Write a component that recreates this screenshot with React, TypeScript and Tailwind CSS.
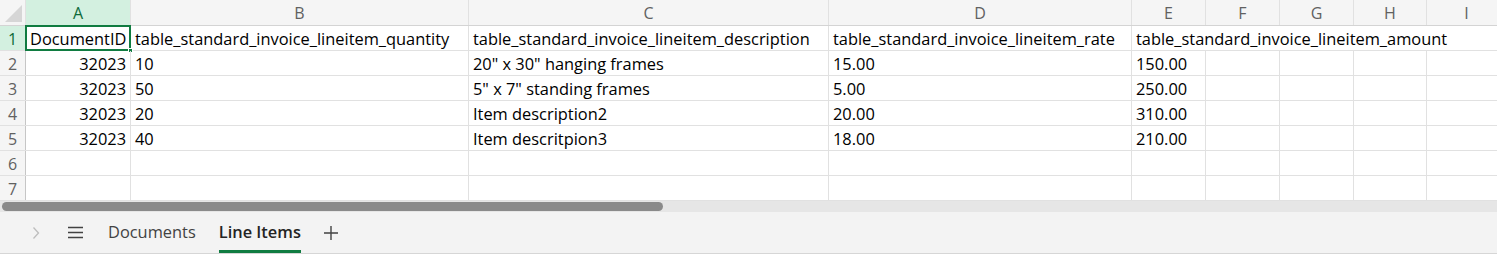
import React from "react"

const cols = [
  { label: "A", w: "w-[105px]" },
  { label: "B", w: "w-[338px]" },
  { label: "C", w: "w-[360px]" },
  { label: "D", w: "w-[303px]" },
  { label: "E", w: "w-[74px]" },
  { label: "F", w: "w-[74px]" },
  { label: "G", w: "w-[74px]" },
  { label: "H", w: "w-[73px]" },
  { label: "I", w: "w-[80px]" },
]

const rows: string[][] = [
  ["DocumentID", "table_standard_invoice_lineitem_quantity", "table_standard_invoice_lineitem_description", "table_standard_invoice_lineitem_rate", "table_standard_invoice_lineitem_amount"],
  ["32023", "10", "20\" x 30\" hanging frames", "15.00", "150.00"],
  ["32023", "50", "5\" x 7\" standing frames", "5.00", "250.00"],
  ["32023", "20", "Item description2", "20.00", "310.00"],
  ["32023", "40", "Item descritpion3", "18.00", "210.00"],
  [],
  [],
]

export default function App() {
  return (
    <div className="w-[1497px] h-[256px] overflow-hidden bg-white font-['Open_Sans',sans-serif] text-[16.4px] text-black">
      {/* column headers */}
      <div className="flex h-[26px] bg-[#f5f5f5] border-b border-[#d4d4d4]">
        <div className="w-[26px] shrink-0 relative border-r border-[#e1e1e1]">
          <div className="absolute right-[3px] bottom-[3px] w-0 h-0 border-l-[17px] border-l-transparent border-b-[17px] border-b-[#d6d6d6]" />
        </div>
        {cols.map((c, i) => (
          <div
            key={c.label}
            className={
              "shrink-0 flex items-center justify-center border-r text-[16px] " +
              c.w +
              (i === 0
                ? " bg-[#d3f0e0] text-[#0e6b3a] border-[#e1e1e1]"
                : " text-[#616161] border-[#e1e1e1]")
            }
          >
            {c.label}
          </div>
        ))}
      </div>

      {/* rows */}
      {rows.map((r, ri) => (
        <div key={ri} className="flex h-[25px] border-b border-[#e1e1e1]">
          <div
            className={
              "w-[26px] shrink-0 flex items-center justify-center border-r text-[16px] pt-[2px] " +
              (ri === 0 ? "bg-[#d3f0e0] text-[#0e6b3a] border-[#c6c6c6]" : "bg-[#f5f5f5] text-[#616161] border-[#c6c6c6]")
            }
          >
            {ri + 1}
          </div>
          {cols.map((c, ci) => {
            // header text in E overflows across the empty cells to its right
            if (ri === 0 && ci > 4) return null
            const v = r[ci] ?? ""
            const num = ci === 0 && ri > 0
            const selected = ri === 0 && ci === 0
            const spill = ri === 0 && ci === 4
            return (
              <div
                key={c.label}
                className={
                  "flex items-center whitespace-nowrap px-[4px] pt-[3px] relative " +
                  (spill ? "flex-1" : "shrink-0 border-r border-[#e1e1e1] " + c.w) +
                  (num ? " justify-end" : "")
                }
              >
                {v}
                {selected && (
                  <>
                    <div className="absolute -left-[1px] -top-[1px] -right-[1px] -bottom-[1px] border-2 border-[#107c41]" />
                    <div className="absolute -right-[3px] -bottom-[3px] w-[5px] h-[5px] bg-[#107c41] border border-white" />
                  </>
                )}
              </div>
            )
          })}
        </div>
      ))}

      {/* horizontal scrollbar */}
      <div className="h-[11px] bg-[#e6e6e6] flex items-center pl-[2px]">
        <div className="w-[661px] h-[9px] rounded-full bg-[#8a8a8a]" />
      </div>

      {/* sheet tabs */}
      <div className="h-[42px] bg-[#f3f3f3] border-b border-[#d6d6d6] flex items-center text-[#424242] pl-[32px]">
        <svg width="8" height="14" viewBox="0 0 8 14" fill="none" className="mr-[28px]">
          <path d="M1.5 1.5 L6.5 7 L1.5 12.5" stroke="#bdbdbd" strokeWidth="1.3" />
        </svg>
        <svg width="15" height="13" viewBox="0 0 15 13" fill="none" className="mr-[25px]">
          <path d="M0 1.5 H15 M0 6.5 H15 M0 11.5 H15" stroke="#424242" strokeWidth="1.4" />
        </svg>
        <div className="text-[16.4px] text-[#424242]">Documents</div>
        <div className="ml-[23px] h-full flex flex-col justify-center relative">
          <span className="text-[16.4px] font-semibold text-[#242424]">Line Items</span>
          <div className="absolute left-0 right-0 bottom-0 h-[3px] bg-[#107c41]" />
        </div>
        <svg width="16" height="16" viewBox="0 0 16 16" fill="none" className="ml-[22px]">
          <path d="M8 1 V15 M1 8 H15" stroke="#424242" strokeWidth="1.4" />
        </svg>
      </div>
    </div>
  )
}
